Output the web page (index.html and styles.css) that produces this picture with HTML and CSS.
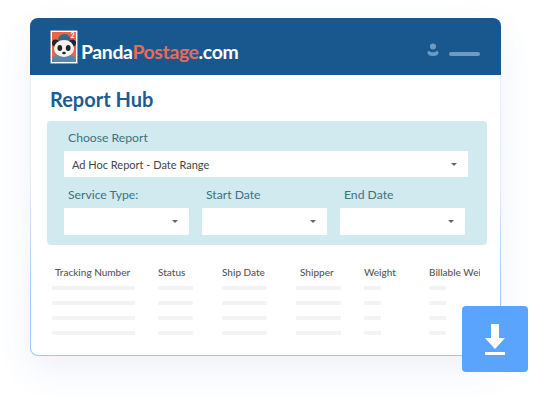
FILE: index.html
```html
<!DOCTYPE html>
<html lang="en">
<head>
    <meta charset="UTF-8">
    <meta name="viewport" content="width=device-width, initial-scale=1.0">
    <title>Report Hub</title>
    <link rel="stylesheet" href="styles.css">
</head>
<body>
    <div class="card">
        <div class="topbar">
            <div class="logo">
                <svg class="stamp" width="28" height="34" viewBox="0 0 28 34">
                    <rect x="0.5" y="0.5" width="27" height="33" fill="#fff" stroke="#8a8f96" stroke-dasharray="1.5 1"/>
                    <rect x="2" y="2" width="24" height="30" fill="#e9654c"/>
                    <path d="M2 32v-3c2-4 7-5 12-5s10 1 12 5v3z" fill="#5d86ab"/>
                    <path d="M8 12c-1-5 3-8 6.500-8s7 3 6 8z" fill="#3f6384"/>
                    <circle cx="5.500" cy="13" r="3.500" fill="#22262b"/>
                    <circle cx="22.500" cy="13" r="3.500" fill="#22262b"/>
                    <ellipse cx="14" cy="18.500" rx="10" ry="8.500" fill="#f6f4ef"/>
                    <ellipse cx="9.800" cy="18" rx="2.400" ry="3" fill="#22262b"/>
                    <ellipse cx="18.200" cy="18" rx="2.400" ry="3" fill="#22262b"/>
                    <ellipse cx="14" cy="23" rx="1.800" ry="1.200" fill="#22262b"/>
                    <text x="20.500" y="8" class="stamp-num">2</text>
                </svg>
                <span class="logo-text">Panda<span class="logo-accent">Postage</span>.com</span>
            </div>
            <div class="user">
                <svg width="12" height="14" viewBox="0 0 12 14">
                    <circle cx="6" cy="3.500" r="3" fill="#6f9bc2"/>
                    <path d="M0.500 9.500c0-1 .8-1.500 1.500-1.500 1 1 2.500 1.300 4 1.300s3-.3 4-1.300c.7 0 1.500.5 1.500 1.500 0 2.500-2 3.500-5.500 3.500s-5.500-1-5.500-3.500z" fill="#6f9bc2"/>
                </svg>
                <span class="user-line"></span>
            </div>
        </div>

        <div class="content">
            <h1>Report Hub</h1>
            <div class="panel">
                <label>Choose Report</label>
                <div class="select select-wide">
                    <span>Ad Hoc Report - Date Range</span>
                    <i class="caret"></i>
                </div>
                <div class="fields">
                    <div class="field">
                        <label>Service Type:</label>
                        <div class="select"><i class="caret"></i></div>
                    </div>
                    <div class="field">
                        <label>Start Date</label>
                        <div class="select"><i class="caret"></i></div>
                    </div>
                    <div class="field">
                        <label>End Date</label>
                        <div class="select"><i class="caret"></i></div>
                    </div>
                </div>
            </div>

            <div class="table">
                <div class="th th-first">Tracking Number</div>
                <div class="th">Status</div>
                <div class="th">Ship Date</div>
                <div class="th th-shipper">Shipper</div>
                <div class="th">Weight</div>
                <div class="th">Billable Weight</div>

                <span class="bar bar-l"></span><span class="bar bar-s"></span><span class="bar bar-m"></span><span class="bar bar-m"></span><span class="bar bar-xs"></span><span class="bar bar-xs"></span>
                <span class="bar bar-l"></span><span class="bar bar-s"></span><span class="bar bar-m"></span><span class="bar bar-m"></span><span class="bar bar-xs"></span><span class="bar bar-xs"></span>
                <span class="bar bar-l"></span><span class="bar bar-s"></span><span class="bar bar-m"></span><span class="bar bar-m"></span><span class="bar bar-xs"></span><span class="bar bar-xs"></span>
                <span class="bar bar-l"></span><span class="bar bar-s"></span><span class="bar bar-m"></span><span class="bar bar-m"></span><span class="bar bar-xs"></span><span class="bar bar-xs"></span>
            </div>
        </div>

        <div class="download">
            <svg width="20" height="31" viewBox="0 0 20 31">
                <path d="M6 0h8v14h6L10 25 0 14h6z" fill="#fff"/>
                <rect x="0" y="28" width="20" height="3" fill="#fff"/>
            </svg>
        </div>
    </div>
</body>
</html>
```

FILE: styles.css
```css
body {
    margin: 0;
    padding: 18px 0 0 30px;
    background-color: #fff;
    font-family: Lato, Arial, sans-serif;
    height: 402px;
    overflow: hidden;
}
.card {
    position: relative;
    width: 471px;
    height: 338px;
    box-sizing: border-box;
    background: linear-gradient(#fff, #fff) padding-box, linear-gradient(#e6f0ff, #dfecff 50%, #9cc8ff 85%) border-box;
    border: 1px solid transparent;
    border-top: none;
    border-radius: 8px;
    box-shadow: 0 14px 34px rgba(70,100,190,0.09);
}
.topbar {
    display: flex;
    align-items: center;
    justify-content: space-between;
    height: 57px;
    box-sizing: border-box;
    margin: 0 -1px;
    padding: 0 21px 0 20px;
    background-color: #19588f;
    border-radius: 8px 8px 0 0;
}
.logo {
    display: flex;
    align-items: flex-end;
    gap: 3px;
}
.stamp-num {
    font-size: 7px;
    font-weight: 700;
    fill: #fff;
}
.logo-text {
    font-size: 19.4px;
    font-weight: 700;
    color: #fff;
    letter-spacing: -0.35px;
    line-height: 23px;
    margin-bottom: 1px;
}
.logo-accent {
    color: #ec6a55;
}
.user {
    display: flex;
    align-items: flex-end;
    gap: 10px;
    padding-top: 7px;
}
.user-line {
    width: 31px;
    height: 4px;
    border-radius: 2px;
    background-color: #6f9bc2;
    margin-bottom: 1px;
}
.content {
    padding: 0 13px 0 16px;
}
h1 {
    margin: 0;
    padding: 12px 0 0 3px;
    height: 34px;
    font-size: 20px;
    line-height: 25px;
    font-weight: 700;
    color: #1f5b91;
}
.panel {
    width: 440px;
    height: 124px;
    box-sizing: border-box;
    padding: 8px 19px 0 17px;
    background-color: #d0eaef;
    border-radius: 4px;
}
label {
    display: block;
    font-size: 12.2px;
    line-height: 18px;
    color: #41707f;
    padding-left: 4px;
}
.select {
    position: relative;
    display: flex;
    align-items: center;
    height: 27px;
    box-sizing: border-box;
    padding-left: 8px;
    margin-top: 4px;
    background-color: #fff;
    border-radius: 1px;
    font-size: 11px;
    color: #444;
}
.select-wide {
    width: 404px;
    height: 26px;
    margin-bottom: 9px;
}
.caret {
    position: absolute;
    right: 11px;
    top: 12px;
    border-left: 3px solid transparent;
    border-right: 3px solid transparent;
    border-top: 3px solid #666;
}
.fields {
    display: flex;
    gap: 13px;
}
.field {
    width: 125px;
}
.table {
    display: grid;
    grid-template-columns: 106px 64px 74px 68px 65px 51px;
    grid-auto-rows: 15px;
    width: 428px;
    overflow: hidden;
    padding: 20px 0 0 5px;
}
.th {
    height: 21px;
    font-size: 10px;
    line-height: 14px;
    font-weight: 500;
    color: #555;
    white-space: nowrap;
}
.th-first {
    padding-left: 3px;
}
.th-shipper {
    padding-left: 4px;
}
.bar {
    align-self: center;
    display: block;
    height: 4px;
    background-color: #f3f3f3;
    border-radius: 1px;
}
.bar-l {
    width: 83px;
}
.bar-m {
    width: 45px;
}
.bar-s {
    width: 35px;
}
.bar-xs {
    width: 17px;
}
.download {
    position: absolute;
    left: 431px;
    top: 288px;
    width: 66px;
    height: 66px;
    display: flex;
    align-items: center;
    justify-content: center;
    background-color: #5ba4fe;
    border-radius: 4px;
}
```
